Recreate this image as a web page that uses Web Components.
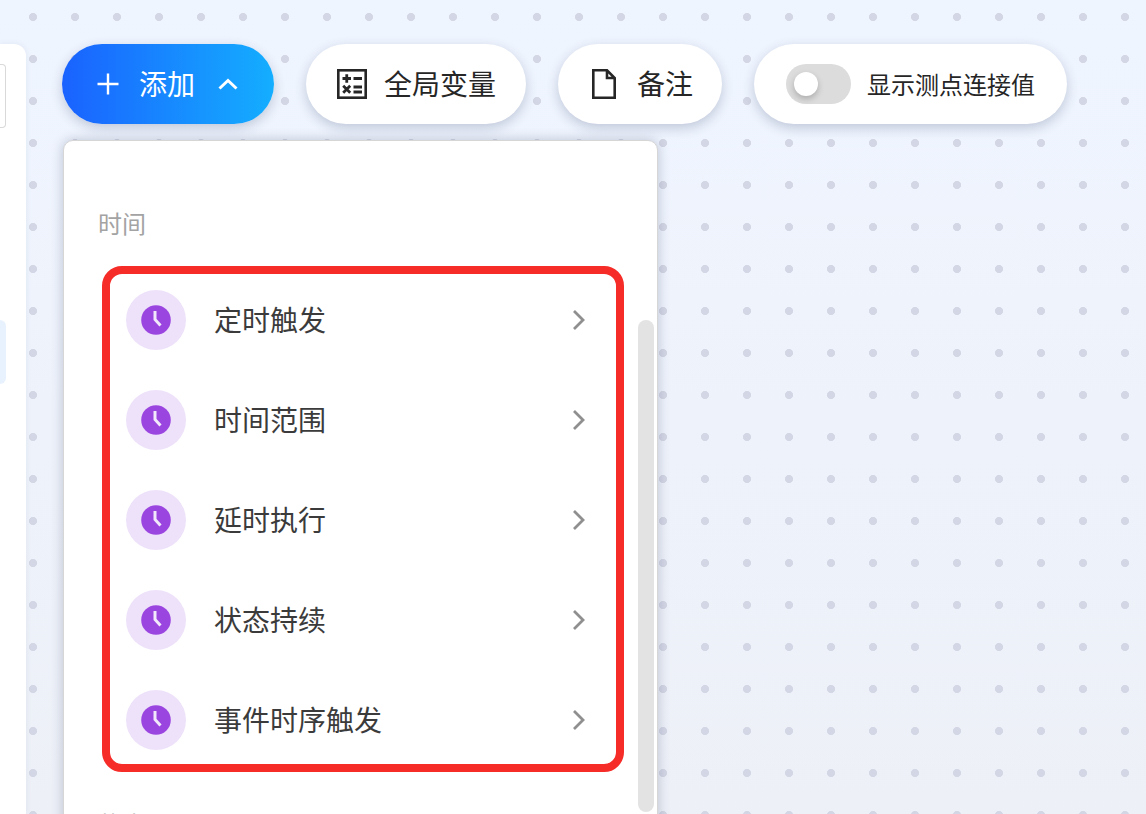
<!DOCTYPE html>
<html lang="zh">
<head>
<meta charset="utf-8">
<title>添加</title>
<style>
  html, body { margin: 0; height: 100%; overflow: hidden; }
  body { font-family: "Noto Sans CJK SC", "Noto Sans", sans-serif; }
</style>
</head>
<body>
<flow-canvas>
  <side-panel slot="side"></side-panel>
  <tool-bar slot="bar">
    <add-button>添加</add-button>
    <pill-button icon="calc">全局变量</pill-button>
    <pill-button icon="note">备注</pill-button>
    <switch-pill>显示测点连接值</switch-pill>
  </tool-bar>
  <add-menu slot="menu">
    <span slot="heading">时间</span>
    <menu-item>定时触发</menu-item>
    <menu-item>时间范围</menu-item>
    <menu-item>延时执行</menu-item>
    <menu-item>状态持续</menu-item>
    <menu-item>事件时序触发</menu-item>
    <span slot="next">状态</span>
  </add-menu>
</flow-canvas>

<script>
// page background with the dot grid, holds the side panel and the toolbar + menu column
class FlowCanvas extends HTMLElement {
  constructor() {
    super();
    this.attachShadow({ mode: "open" });
    this.shadowRoot.innerHTML = `
      <style>
        :host {
          display: flex;
          height: 814px;
          overflow: hidden;
          background:
            radial-gradient(circle at 33px 17px, #d3d6e4 3.7px, transparent 4.4px) 0 0 / 42px 42px,
            linear-gradient(180deg, #eff5ff 0%, #edf0f7 100%);
        }
        .main { display: flex; flex-direction: column; padding: 44px 0 0 36px; min-width: 0; flex: 1; }
      </style>
      <slot name="side"></slot>
      <div class="main">
        <slot name="bar"></slot>
        <slot name="menu"></slot>
      </div>
    `;
  }
}

class SidePanel extends HTMLElement {
  constructor() {
    super();
    this.attachShadow({ mode: "open" });
    this.shadowRoot.innerHTML = `
      <style>
        :host {
          display: flex;
          flex-direction: column;
          flex: none;
          width: 26px;
          margin-top: 44px;
          background: #fff;
          border-top-right-radius: 12px;
          box-shadow: 0 0 6px rgba(40, 60, 100, 0.08);
        }
        .input {
          height: 62px;
          width: 5px;
          margin-top: 20px;
          border: 1px solid #d9d9d9;
          border-left: 0;
          border-radius: 0 4px 4px 0;
        }
        .active {
          height: 64px;
          width: 6px;
          margin-top: 192px;
          background: #e8f2ff;
          border-radius: 0 6px 6px 0;
        }
      </style>
      <div class="input"></div>
      <div class="active"></div>
    `;
  }
}

class ToolBar extends HTMLElement {
  constructor() {
    super();
    this.attachShadow({ mode: "open" });
    this.shadowRoot.innerHTML = `
      <style>
        :host { display: flex; gap: 32px; align-items: center; height: 80px; flex: none; }
      </style>
      <slot></slot>
    `;
  }
}

const pillStyle = `
  :host {
    display: flex;
    align-items: center;
    flex: none;
    box-sizing: border-box;
    height: 80px;
    border-radius: 40px;
    background: #fff;
    color: #262626;
    font-size: 28px;
    box-shadow: 0 4px 12px rgba(40, 60, 100, 0.24);
    white-space: nowrap;
  }
  span { padding-bottom: 2px; }
  svg { display: block; flex: none; }
`;

class AddButton extends HTMLElement {
  constructor() {
    super();
    this.attachShadow({ mode: "open" });
    this.shadowRoot.innerHTML = `
      <style>
        ${pillStyle}
        :host {
          width: 212px;
          padding-left: 34px;
          color: #fff;
          background: linear-gradient(90deg, #1a62ff 0%, #14aeff 100%);
        }
        .label { margin: 0 23px 0 19px; }
      </style>
      <svg width="24" height="24" viewBox="0 0 24 24" fill="none" stroke="#fff" stroke-width="2.4">
        <path d="M12 1.5v21M1.5 12h21"/>
      </svg>
      <span class="label"><slot></slot></span>
      <svg width="20" height="12" viewBox="0 0 20 12" fill="none" stroke="#fff" stroke-width="3">
        <path d="M1.5 10.5L10 2.5l8.500 8"/>
      </svg>
    `;
  }
}

const toolIcons = {
  calc: `<svg width="30" height="30" viewBox="0 0 30 30" fill="none" stroke="#262626">
      <rect x="1.300" y="1.300" width="27.400" height="27.400" stroke-width="2.600"/>
      <path stroke-width="2.800" d="M5.500 9.500h8.500M9.750 5.200v8.600M16.500 9.500h8.500M16.500 18h8.500M16.500 23h8.500M6.200 16.800l7 7M13.200 16.800l-7 7"/>
    </svg>`,
  note: `<svg width="24" height="30" viewBox="0 0 24 30" fill="none" stroke="#262626" stroke-width="2.600">
      <path d="M1.300 1.300h13.700l7.700 7.700v19.700H1.300zM15 1.300v7.700h7.700"/>
    </svg>`,
};

class PillButton extends HTMLElement {
  constructor() {
    super();
    this.attachShadow({ mode: "open" });
    const name = this.getAttribute("icon");
    const icon = toolIcons[name] || "";
    this.shadowRoot.innerHTML = `
      <style>
        ${pillStyle}
        :host { padding: 0 ${name === "note" ? 29 : 30}px 0 ${name === "note" ? 34 : 31}px; gap: ${name === "note" ? 21 : 17}px; }
      </style>
      ${icon}
      <span><slot></slot></span>
    `;
  }
}

class SwitchPill extends HTMLElement {
  constructor() {
    super();
    this.attachShadow({ mode: "open" });
    this.shadowRoot.innerHTML = `
      <style>
        ${pillStyle}
        :host { padding: 0 32px; gap: 16px; font-size: 24px; }
        .track {
          display: flex;
          align-items: center;
          box-sizing: border-box;
          width: 65px;
          height: 40px;
          padding-left: 8px;
          border-radius: 20px;
          background: #dcdcdc;
        }
        .knob {
          width: 24px;
          height: 24px;
          border-radius: 50%;
          background: #fff;
          box-shadow: 0 3px 6px rgba(0, 0, 0, 0.22);
        }
      </style>
      <div class="track"><div class="knob"></div></div>
      <span><slot></slot></span>
    `;
  }
}

// the dropdown under the add button, the red frame marks the time group
class AddMenu extends HTMLElement {
  constructor() {
    super();
    this.attachShadow({ mode: "open" });
    this.shadowRoot.innerHTML = `
      <style>
        :host {
          display: block;
          position: relative;
          flex: none;
          box-sizing: border-box;
          width: 595px;
          height: 720px;
          margin: 16px 0 0 1px;
          padding: 65px 0 0 34px;
          background: #fff;
          border: 1px solid #d6d6d6;
          border-radius: 10px;
          box-shadow: 0 0 12px rgba(40, 50, 90, 0.26);
        }
        .heading { font-size: 24px; line-height: 34px; color: #a3a3a3; }
        .group {
          box-sizing: border-box;
          width: 522px;
          height: 506px;
          margin: 26px 0 0 4px;
          padding: 0 0 0 16px;
          border: 8px solid #f52c28;
          border-radius: 20px;
        }
        .items { margin-top: -4px; }
        .next { margin-top: 35px; }
        .thumb {
          position: absolute;
          left: 574px;
          top: 179px;
          width: 16px;
          height: 492px;
          border-radius: 8px;
          background: #e3e3e3;
        }
      </style>
      <div class="heading"><slot name="heading"></slot></div>
      <div class="group"><div class="items"><slot></slot></div></div>
      <div class="heading next"><slot name="next"></slot></div>
      <div class="thumb"></div>
    `;
  }
}

class MenuItem extends HTMLElement {
  constructor() {
    super();
    this.attachShadow({ mode: "open" });
    this.shadowRoot.innerHTML = `
      <style>
        :host {
          display: flex;
          align-items: center;
          height: 100px;
          padding-right: 30px;
          font-size: 28px;
          color: #3b3b3b;
          box-sizing: border-box;
        }
        .badge {
          display: flex;
          align-items: center;
          justify-content: center;
          flex: none;
          width: 60px;
          height: 60px;
          margin-right: 28px;
          border-radius: 50%;
          background: #eee2fa;
        }
        .label { flex: 1; white-space: nowrap; padding-bottom: 2px; }
        svg { display: block; flex: none; }
      </style>
      <div class="badge">
        <svg width="30" height="30" viewBox="0 0 30 30">
          <circle cx="15" cy="15" r="14.800" fill="#9b45e0"/>
          <path d="M14 6v8.500L19.500 20.500" fill="none" stroke="#f1e8fb" stroke-width="3"/>
        </svg>
      </div>
      <span class="label"><slot></slot></span>
      <svg width="14" height="22" viewBox="0 0 14 22" fill="none" stroke="#8f8f8f" stroke-width="2.800">
        <path d="M2 2l9 9-9 9"/>
      </svg>
    `;
  }
}

customElements.define("flow-canvas", FlowCanvas);
customElements.define("side-panel", SidePanel);
customElements.define("tool-bar", ToolBar);
customElements.define("add-button", AddButton);
customElements.define("pill-button", PillButton);
customElements.define("switch-pill", SwitchPill);
customElements.define("add-menu", AddMenu);
customElements.define("menu-item", MenuItem);
</script>
</body>
</html>
